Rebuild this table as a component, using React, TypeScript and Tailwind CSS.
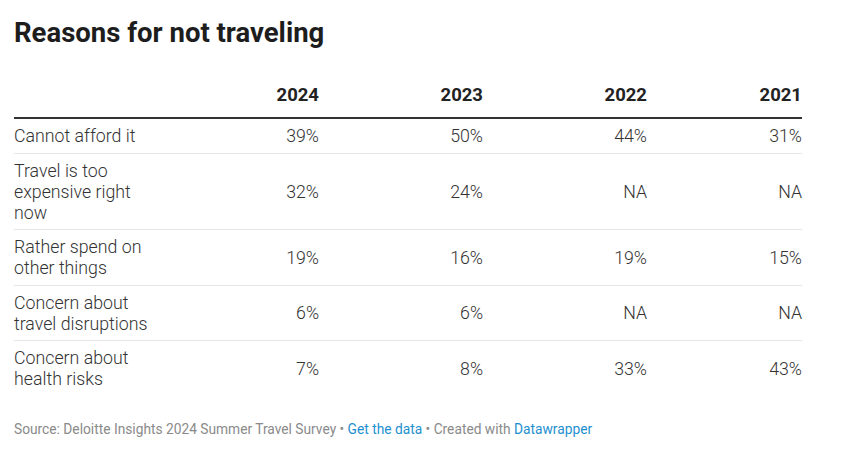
const rows = [
  { label: "Cannot afford it", values: ["39%", "50%", "44%", "31%"] },
  { label: "Travel is too expensive right now", values: ["32%", "24%", "NA", "NA"] },
  { label: "Rather spend on other things", values: ["19%", "16%", "19%", "15%"] },
  { label: "Concern about travel disruptions", values: ["6%", "6%", "NA", "NA"] },
  { label: "Concern about health risks", values: ["7%", "8%", "33%", "43%"] },
];

const years = ["2024", "2023", "2022", "2021"];

const cols = "grid grid-cols-[141px_164px_164px_164px_155px]";

export default function App() {
  return (
    <div className="w-[850px] h-[455px] bg-white font-['Roboto',sans-serif] text-[#333] px-[14px] pt-[16px]">
      <h1 className="text-[27.5px] font-bold leading-[34px] text-[#1d1d1d]">
        Reasons for not traveling
      </h1>

      <div className="w-[788px] mt-[35px]">
        {/* header */}
        <div className={`${cols} border-b-2 border-[#333] pb-[11px]`}>
          <div />
          {years.map((y) => (
            <div key={y} className="text-right text-[18.5px] font-bold leading-[21px] text-[#222]">
              {y}
            </div>
          ))}
        </div>

        {rows.map((r, i) => (
          <div
            key={r.label}
            className={`${cols} items-center pt-[7px] pb-[5.5px] text-[17.75px] font-light leading-[21px] ${
              i < rows.length - 1 ? "border-b border-[#e6e6e6]" : ""
            }`}
          >
            <div className="pr-[2px]">{r.label}</div>
            {r.values.map((v, j) => (
              <div key={j} className="text-right">
                {v}
              </div>
            ))}
          </div>
        ))}
      </div>

      <div className="mt-[25px] text-[13.75px] leading-[16px] text-[#8a8a8a]">
        Source: Deloitte Insights 2024 Summer Travel Survey •{" "}
        <span className="text-[#1d8fd0]">Get the data</span> • Created with{" "}
        <span className="text-[#1d8fd0]">Datawrapper</span>
      </div>
    </div>
  );
}
